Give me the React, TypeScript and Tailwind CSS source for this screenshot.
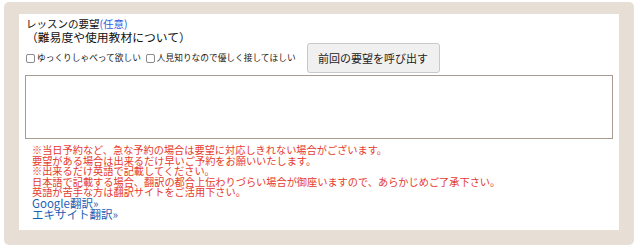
import { useState } from "react";

const font = { fontFamily: '"Noto Sans CJK JP", "Noto Sans", sans-serif' };

function Check({ label }: { label: string }) {
	const [checked, setChecked] = useState(false);
	return (
		<label className="flex items-center gap-[2px] cursor-pointer">
			<input
				type="checkbox"
				checked={checked}
				onChange={() => setChecked((v) => !v)}
				className="appearance-none w-[9px] h-[9px] border border-[#8a8a8a] rounded-[2px] bg-white checked:bg-[#3b82f6]"
			/>
			<span className="text-[8.7px] leading-[12px] text-[#222]">{label}</span>
		</label>
	);
}

export default function App() {
	const [request, setRequest] = useState("");

	return (
		<div className="w-[640px] h-[250px] bg-white pt-[2px] pl-[4px] pr-[6px]" style={font}>
			<div className="bg-[#e7dfd6] rounded-[5px] pt-[12px] pl-[15px] pr-[15px] pb-[15px]">
				<div className="bg-white h-[216px] pt-[4px] px-[6px]">
					<div className="pl-[1px] text-[#111]">
						<div className="text-[10.5px] leading-[12px]">
							レッスンの要望<span className="text-[#2f5ee0]">(任意)</span>
						</div>
						<div className="text-[11.8px] leading-[13px]">（難易度や使用教材について）</div>
					</div>
					<div className="flex items-center mt-0">
						<div className="flex items-center gap-[5px] pl-[1px]">
							<Check label="ゆっくりしゃべって欲しい" />
							<Check label="人見知りなので優しく接してほしい" />
						</div>
						<button
							type="button"
							className="ml-[11px] w-[133px] h-[30px] border border-[#c9c9c9] rounded-[3px] bg-[#f0f0f0] text-[11px] text-[#222]"
						>
							前回の要望を呼び出す
						</button>
					</div>
					<textarea
						value={request}
						onChange={(e) => setRequest(e.target.value)}
						className="block w-[588px] h-[64px] mt-[2px] border border-[#a89c90] bg-white resize-none outline-none text-[12px] p-1"
					/>
					<div className="mt-[6px] pl-[7px] text-[10.2px] leading-[10.6px]">
						<p className="text-[#e53a2e]">※当日予約など、急な予約の場合は要望に対応しきれない場合がございます。</p>
						<p className="text-[#e53a2e]">要望がある場合は出来るだけ早いご予約をお願いいたします。</p>
						<p className="text-[#e53a2e]">※出来るだけ英語で記載してください。</p>
						<p className="text-[#e53a2e]">日本語で記載する場合、翻訳の都合上伝わりづらい場合が御座いますので、あらかじめご了承下さい。</p>
						<p className="text-[#e53a2e]">英語が苦手な方は翻訳サイトをご活用下さい。</p>
						<a href="#" className="block text-[11.5px] leading-[10.6px] text-[#1b5fb5]">Google翻訳»</a>
						<a href="#" className="block text-[11.5px] leading-[10.6px] text-[#1b5fb5]">エキサイト翻訳»</a>
					</div>
				</div>
			</div>
		</div>
	);
}
